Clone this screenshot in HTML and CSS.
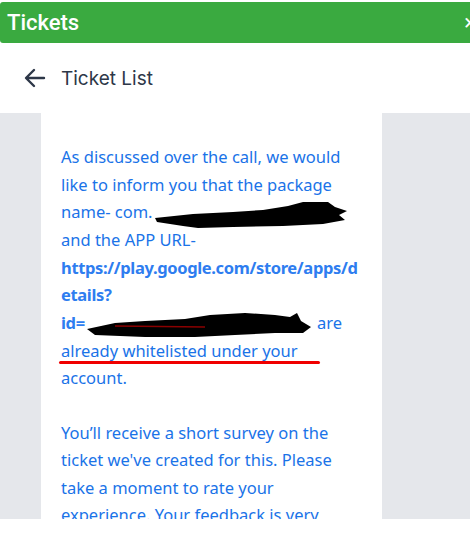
FILE: index.html
```html
<!DOCTYPE html>
<html lang="en">
  <head>
    <meta charset="utf-8">
    <title>Tickets</title>
    <link rel="stylesheet" href="styles.css">
  </head>
  <body>
    <div class="topbar">
      <span class="topbar-title">Tickets</span>
      <span class="topbar-close">×</span>
    </div>
    <div class="nav">
      <svg class="back" width="22" height="20" viewBox="0 0 22 20">
        <path d="M20 10H3M10 2L2 10l8 8" fill="none" stroke="#2d3748" stroke-width="2.4" stroke-linecap="round" stroke-linejoin="round"/>
      </svg>
      <span class="nav-title">Ticket List</span>
    </div>
    <div class="content">
      <div class="card">
        <p class="msg">
          As discussed over the call, we would like to inform you that the package name- com.<svg class="scribble" width="196" height="30" viewBox="0 0 196 30"><path d="M2 18 L40 14 L80 12 L110 10 L135 6 L150 2 L175 2 L182 7 L194 11 L186 15 L192 20 L170 24 L130 26 L80 27 L45 28 L30 26 L4 22 Z" fill="#000"/></svg><br>
          and the APP URL-<br>
          <b class="url">https://play.google.com/store/apps/details?</b><br>
          <b class="url">id=</b><svg class="scribble" width="228" height="30" viewBox="0 0 228 30"><path d="M2 18 L30 12 L60 10 L100 8 L125 4 L160 2 L190 4 L205 6 L212 2 L216 10 L226 16 L218 22 L190 22 L150 24 L110 26 L60 26 L10 24 Z" fill="#000"/><path d="M30 15 L120 16" stroke="#8b0000" stroke-width="1.5"/></svg> are
          <span class="marked">already whitelisted under your</span>
          account.
        </p>
        <p class="msg">
          You’ll receive a short survey on the ticket we've created for this. Please take a moment to rate your experience. Your feedback is very important to us.
        </p>
      </div>
    </div>
  </body>
</html>
```

FILE: styles.css
```css
body {
  margin: 0;
  background-color: #ffffff;
  font-family: "Segoe UI", "Noto Sans", sans-serif;
  overflow: hidden;
}
.topbar {
  margin-top: 2px;
  height: 41px;
  background-color: #3aaa40;
  border-radius: 3px 0 0 3px;
  display: flex;
  align-items: center;
  justify-content: space-between;
  padding: 0 0 0 7px;
  color: #ffffff;
  font-family: Roboto, sans-serif;
}
.topbar-title {
  font-size: 22px;
  font-weight: 500;
}
.topbar-close {
  font-size: 22px;
  margin-right: -6px;
}
.nav {
  height: 70px;
  display: flex;
  align-items: center;
  padding-left: 24px;
  gap: 15px;
}
.nav-title {
  font-family: Inter, sans-serif;
  font-size: 19px;
  color: #2d3748;
}
.content {
  background-color: #e5e7eb;
  height: 406px;
  padding: 0 88px 0 41px;
  overflow: hidden;
}
.card {
  background-color: #ffffff;
  height: 100%;
  padding: 30px 20px 0 20px;
  box-sizing: border-box;
}
.msg {
  margin: 0 0 27px 0;
  color: #1a73e8;
  font-size: 16.5px;
  line-height: 27.5px;
}
.url {
  font-weight: 700;
  color: #2e7df0;
  letter-spacing: -0.35px;
  word-break: break-all;
}
.scribble {
  vertical-align: -8px;
  margin: -4px 0;
}
.marked {
  position: relative;
}
.marked::after {
  content: "";
  position: absolute;
  left: -2px;
  right: -22px;
  bottom: -2px;
  height: 3px;
  border-radius: 2px;
  background-color: #f00000;
}
```
